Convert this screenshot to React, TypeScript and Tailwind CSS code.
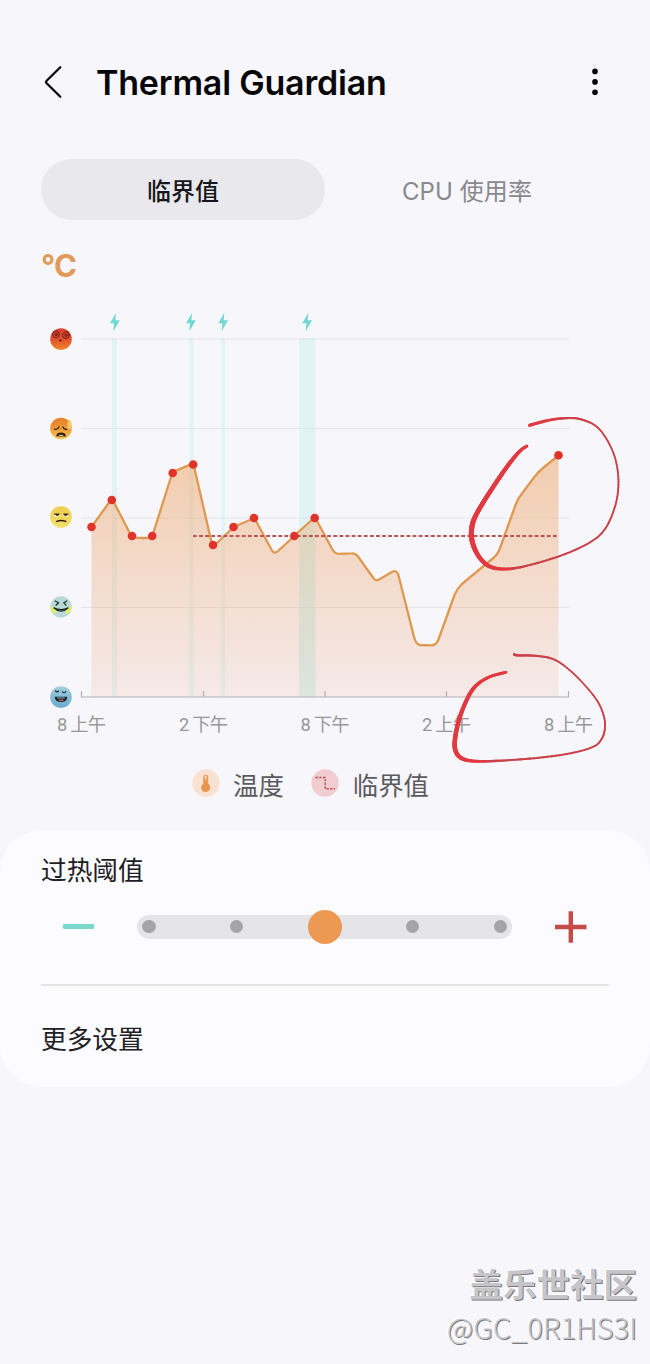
import React from "react";

type Pt = [number, number];
type InkPt = [number, number, number];

const GRID_Y = [339, 428.5, 518, 607.5];
const TICKS: { x: number; label: string }[] = [
  { x: 81.5, label: "8 上午" },
  { x: 203.5, label: "2 下午" },
  { x: 325, label: "8 下午" },
  { x: 446.5, label: "2 上午" },
  { x: 568.5, label: "8 上午" },
];
const CHARGES = [
  { x: 112, w: 5, icon: 115 },
  { x: 189.5, w: 4, icon: 191 },
  { x: 221.5, w: 3.5, icon: 223.3 },
  { x: 299, w: 16.5, icon: 307.3 },
];
const HOT: Pt[] = [
  [91.5, 527], [111.8, 500], [132, 536], [152.2, 536], [172.7, 473], [193.2, 464.5], [213, 545],
  [233.5, 527], [254, 518], [294.3, 536], [314.7, 518], [558.5, 455.3],
];
const CURVE =
  "M91.5 527L109.8 501.5Q111.8 498 113.8 502L130 533.5Q132 537 136 537.6Q142 538.3 148 537.8Q152 537.5 153.3 533L171 477Q172.4 472.5 176 470.6L188 465.6Q193.2 463 194.6 469L211 540Q213 547.5 218 542L229 531.5Q233.5 527 238 525L250 520Q254 518 256.5 522L272 550.5Q274 554.5 278 551L290 540Q294.3 536 299 531.5L310 521.5Q314.7 517 317.5 522L332.5 549.5Q334.5 553.7 339 553.8L352 553.4Q355.5 553.2 358 556.5L373 577.5Q375.5 582 380 579L391 572.5Q396 569 398.3 574.5L414 637Q416 644.5 420 645L431 645.3Q436 645.5 438.3 640L454.5 595Q457 588.5 462 584L477 571.5L494 557.5Q497.5 554.5 499.5 549.5L515.5 505Q518 498 522 493.5L534 477.5Q538 472 543 468L558.5 455.3";

const RING_TOP: InkPt[] = [
  [527, 446, 2.8], [520, 451, 3.4], [508.3, 465, 4.2], [490, 491.7, 4.6], [476, 515, 4.8],
  [471.7, 528.3, 5], [472.3, 541.7, 5], [478.3, 555.7, 4.6], [488.3, 565.7, 4], [501.7, 569, 3.2],
  [520, 567.3, 2.4], [550, 559.3, 2], [573.3, 550.7, 1.9], [591.7, 541.3, 1.8], [603.3, 531.3, 1.8],
  [611.7, 516, 1.8], [617.3, 496.7, 1.8], [618.3, 476.7, 1.8], [614.7, 456.7, 1.7],
  [606.7, 439.3, 1.7], [596.7, 426.7, 1.7], [583.3, 420, 2], [570, 418, 2.2], [550, 420, 2.7],
  [529.5, 425.3, 3.2],
];
const RING_BOTTOM: InkPt[] = [
  [506, 672.3, 2.8], [490, 676.7, 3], [476.7, 685, 3.5], [468.3, 696.7, 4], [460, 716.7, 4.3],
  [455.3, 736.7, 4.5], [455.3, 750, 4.5], [461.7, 758.3, 4], [476.7, 761.3, 3], [506.7, 760.3, 2.2],
  [543.3, 757.3, 2], [573.3, 752.7, 1.9], [593.3, 746.7, 1.8], [601, 740, 1.8], [604.7, 730, 1.8],
  [604, 716.7, 1.8], [596.7, 700, 1.7], [580, 680, 1.7], [563.3, 665, 1.7], [550, 658, 1.9],
  [533.3, 655.7, 2.2], [517, 655.3, 2.4], [514, 654, 2],
];

/** Pen stroke whose width varies along a Catmull-Rom spline. */
function Ink({ pts }: { pts: InkPt[] }) {
  const out: InkPt[] = [];
  const at = (i: number) => pts[Math.max(0, Math.min(pts.length - 1, i))];
  for (let i = 0; i < pts.length - 1; i++) {
    for (let s = 0; s < 8; s++) {
      const t = s / 8;
      const v = [0, 1, 2].map((k) => {
        const [a, b, c, d] = [at(i - 1)[k], at(i)[k], at(i + 1)[k], at(i + 2)[k]];
        return 0.5 * (2 * b + (c - a) * t + (2 * a - 5 * b + 4 * c - d) * t * t + (3 * b - a - 3 * c + d) * t * t * t);
      });
      out.push([v[0], v[1], v[2]]);
    }
  }
  out.push(pts[pts.length - 1]);
  return (
    <g strokeLinecap="round">
      {out.slice(1).map((p, i) => (
        <line key={i} x1={out[i][0]} y1={out[i][1]} x2={p[0]} y2={p[1]} strokeWidth={p[2]} stroke={p[2] > 2.6 ? "#e03a40" : "#cb4148"} />
      ))}
    </g>
  );
}

function Faces() {
  return (
    <g fill="none" strokeLinecap="round" stroke="#3a1c0c" strokeWidth="1.2">
      <g transform="translate(61 339)">
        <circle r="10.8" fill="url(#f1)" stroke="none" />
        <g stroke="#6d1a18" strokeWidth="1">
          <circle cx="-5" cy="-4.6" r="3.4" />
          <circle cx="-5" cy="-4.6" r="1.3" />
          <circle cx="5" cy="-3.8" r="3.4" />
          <circle cx="5" cy="-3.8" r="1.3" />
        </g>
        <circle cx="-.6" cy="1.4" r="1.1" fill="#4a0f0f" stroke="none" />
      </g>
      <g transform="translate(61 428.5)">
        <circle r="10.8" fill="url(#f2)" stroke="none" />
        <path d="M-6.5 .6Q-3.5 1.6-2-1.6M2-1.6Q3 1.6 6 .8" />
        <path d="M-4 7.4Q-4 4.6 0 4.6T4.2 7.4Z" fill="#4a2b10" />
        <path d="M-2 7.2Q0 6.2 2 7.2" stroke="#f5e6bb" strokeWidth=".9" />
        <path d="M6.8-7.8Q8.5-10 10-7L10.8-1Q10.4 1.2 8 .8Q6 .4 6.2-2Z" fill="#f5c75e" stroke="none" />
      </g>
      <g transform="translate(61 517)">
        <circle r="10.8" fill="url(#f3)" stroke="none" />
        <ellipse cx="-4.2" cy="-2" rx="3" ry="1.6" fill="#fffbe5" stroke="none" />
        <ellipse cx="4.8" cy="-2" rx="3" ry="1.6" fill="#fffbe5" stroke="none" />
        <path d="M-6.4-2.8H-2M2.8-2.8H7" />
        <path d="M-4.4-2.2H-3M4-2.2H5.4" strokeWidth="1.8" />
        <path d="M-4.3 4.4Q0 2.5 4.8 4.4" strokeWidth="1.5" />
      </g>
      <g transform="translate(61 607)">
        <circle r="10.7" fill="#b9d9d8" stroke="none" />
        <path d="M-10.7-.5Q-10.4 4.6-6 7Q-3.6 3.6-5.6 1.4Q-7.6-1-10.7-.5ZM10.7-.5Q10.4 4.6 6 7Q3.6 3.6 5.6 1.4Q7.6-1 10.7-.5Z" fill="#e5ed62" stroke="none" />
        <path d="M-5.8-6L-2.4-4.2L-5-1.8M5.8-6L2.8-4.2L5-1.8" stroke="#1d2a20" />
        <path d="M-7.4.8Q0 7.4 7.4.8Q0 4.6-7.4.8Z" fill="#e9f3ef" stroke="#1d2a20" />
      </g>
      <g transform="translate(61 697)" stroke="#15242e">
        <circle r="10.8" fill="url(#f5)" stroke="none" />
        <path d="M-5.6-6Q-4-4.4-2.4-6M1.4-5.2Q3.2-3.2 4.8-5.4" strokeWidth="1.1" />
        <path d="M-5.6.4H5.6Q5 4.4 0 4.4T-5.6.4Z" fill="#15242e" />
        <path d="M-3.4 1H3.4" stroke="#b9d3de" strokeWidth=".8" />
        <path d="M-1.6 3.4H1.8" stroke="#d86a5f" strokeWidth="1.4" />
      </g>
    </g>
  );
}

function Chart() {
  return (
    <svg className="block h-[470px] w-[650px] shrink-0" viewBox="0 295 650 470">
      <defs>
        <linearGradient id="area" x1="0" y1="455" x2="0" y2="697" gradientUnits="userSpaceOnUse">
          <stop offset="0" stopColor="#eda566" stopOpacity=".53" />
          <stop offset=".5" stopColor="#eeab78" stopOpacity=".36" />
          <stop offset="1" stopColor="#edaa85" stopOpacity=".17" />
        </linearGradient>
        <linearGradient id="f1" x1="0" y1="0" x2="0" y2="1">
          <stop offset="0" stopColor="#d83f31" /><stop offset=".5" stopColor="#e2512b" /><stop offset="1" stopColor="#f0832b" />
        </linearGradient>
        <linearGradient id="f2" x1="0" y1="0" x2="0" y2="1">
          <stop offset="0" stopColor="#e67f2c" /><stop offset=".5" stopColor="#eb9835" /><stop offset="1" stopColor="#f3ce57" />
        </linearGradient>
        <linearGradient id="f3" x1="0" y1="0" x2="0" y2="1">
          <stop offset="0" stopColor="#efcc4b" /><stop offset="1" stopColor="#f0e16b" />
        </linearGradient>
        <linearGradient id="f5" x1="0" y1="0" x2="0" y2="1">
          <stop offset="0" stopColor="#a3cfda" /><stop offset="1" stopColor="#69aacd" />
        </linearGradient>
      </defs>
      {GRID_Y.map((y) => (
        <line key={y} x1="81" x2="569" y1={y} y2={y} stroke="#e4e4e9" strokeWidth="1.2" />
      ))}
      {CHARGES.map((c) => (
        <g key={c.x}>
          <rect x={c.x} y="338" width={c.w} height="359" fill="#bdeeee" fillOpacity=".36" />
          <path d={`M${c.icon + 1} 312.8l-6 10.4h4l-.6 8l6.4-11h-4.4z`} fill="#72d8d0" />
        </g>
      ))}
      <path d={`${CURVE}V697H91.5Z`} fill="url(#area)" />
      <rect x="299" y="534" width="16.5" height="163" fill="#9fdcc9" fillOpacity=".12" />
      <path d="M81.5 691V697H568.5V691M203.5 691V697M325 691V697M446.5 691V697" fill="none" stroke="#b1b1b3" strokeWidth="1.2" />
      <path d={CURVE} fill="none" stroke="#df9850" strokeWidth="2.3" strokeLinejoin="round" />
      <path d="M193 536H559" stroke="#b8544e" strokeWidth="1.8" strokeDasharray="3.8 2.3" />
      {HOT.map(([x, y]) => (
        <circle key={x} cx={x} cy={y} r="4.3" fill="#e0332a" />
      ))}
      <Faces />
      <g fill="#97979a" fontSize="18.3" textAnchor="middle" className="font-['Roboto','Noto_Sans_CJK_SC',sans-serif] font-normal">
        {TICKS.map((t) => (
          <text key={t.x} x={t.x} y="731" textLength="49">{t.label}</text>
        ))}
      </g>
      <Ink pts={RING_TOP} />
      <Ink pts={RING_BOTTOM} />
    </svg>
  );
}

function Legend() {
  return (
    <div className="flex h-[65px] items-start pl-[192px] text-[25.4px] leading-[38px] text-[#5b5b5e]">
      <svg className="mt-1 size-7" viewBox="0 0 28 28">
        <circle cx="14" cy="14" r="13.7" fill="#f8e2d2" />
        <path d="M11.2 8.2a2.5 2.5 0 0 1 5 0v6.6a4.5 4.5 0 1 1-5 0z" fill="#e99750" />
        <path d="M13.7 7.6v2" stroke="#f8e2d2" strokeWidth="1.8" strokeLinecap="round" />
      </svg>
      <span className="ml-[13px] mt-0.5">温度</span>
      <svg className="ml-[27px] mt-1 size-7" viewBox="0 0 28 28">
        <circle cx="14" cy="14" r="13.7" fill="#f1cdd1" />
        <path d="M4.5 8.5H14.2V19.8H24" fill="none" stroke="#c04d50" strokeWidth="1.4" strokeDasharray="2.4 1.3" />
      </svg>
      <span className="ml-[14px] mt-0.5">临界值</span>
    </div>
  );
}

function Slider() {
  return (
    <div className="mt-[19px] flex h-[35px] items-center pl-[63px]">
      <span className="h-[4.5px] w-[31px] rounded-[1px] bg-[#7bd8ce]" />
      <div className="ml-[43px] flex h-6 w-[375px] items-center justify-between rounded-full bg-[#e5e4e8] px-[5px]">
        <i className="size-[13.5px] rounded-full bg-[#a5a4a8]" />
        <i className="-mr-[10px] size-[13.5px] rounded-full bg-[#a5a4a8]" />
        <i className="size-[34px] shrink-0 rounded-full bg-[#eb9953]" />
        <i className="-ml-[10px] size-[13.5px] rounded-full bg-[#a5a4a8]" />
        <i className="size-[13.5px] rounded-full bg-[#a5a4a8]" />
      </div>
      <svg className="ml-[43px] size-8" viewBox="0 0 32 32">
        <path d="M0 16H31.5M15.8 .3V31.7" stroke="#c34c49" strokeWidth="4.4" />
      </svg>
    </div>
  );
}

export default function App() {
  return (
    <div className="flex h-[1364px] w-[650px] flex-col overflow-hidden bg-[#f7f6fb] font-['Inter','Noto_Sans_CJK_SC',sans-serif]">
      <header className="flex h-[159px] shrink-0 items-start pl-[43px] pt-[60px]">
        <svg className="mt-1 h-9 w-6" viewBox="0 0 24 36">
          <path d="M17.3 3.3L3.4 17Q2.4 18 3.4 19L17.3 32.7" fill="none" stroke="#0b0b0c" strokeWidth="2.3" strokeLinecap="round" />
        </svg>
        <h1 className="ml-[29px] w-[478px] whitespace-nowrap font-['Inter'] text-[34px] font-semibold leading-[46px] tracking-[-0.2px] text-[#060607]">
          Thermal Guardian
        </h1>
        <svg className="mt-1.5 h-8 w-10" viewBox="0 0 40 32">
          <circle cx="21" cy="5.4" r="2.8" />
          <circle cx="21" cy="15.9" r="2.8" />
          <circle cx="21" cy="26.2" r="2.8" />
        </svg>
      </header>
      <nav className="ml-[41px] flex h-[61px] w-[568px] shrink-0 text-[24px] leading-[61px]">
        <div className="w-[284px] rounded-full bg-[#e9e9ed] pt-0.5 text-center font-medium text-[#17171a]">临界值</div>
        <div className="w-[284px] pt-0.5 text-center tracking-[0.1px] text-[#89898d]">CPU 使用率</div>
      </nav>
      <div className="h-[75px] shrink-0 pl-[41px] pt-[26px] font-['Inter'] text-[31px] font-bold leading-10 tracking-[-0.8px] text-[#e09a5c]">°C</div>
      <Chart />
      <Legend />
      <section className="h-[257px] shrink-0 rounded-[42px] bg-[#fcfbff] text-[25.7px] leading-[38px] text-[#202022]">
        <h2 className="pl-[41px] pt-[22px]">过热阈值</h2>
        <Slider />
        <div className="mx-[41px] mt-[40px] h-[1.5px] bg-[#e5e4e4]" />
        <p className="pl-[41px] pt-[35px]">更多设置</p>
      </section>
      <footer className="mt-auto flex flex-col items-end pb-[17px] pr-[13px] font-['Noto_Sans_CJK_SC',sans-serif] text-[#c6c5c9] [text-shadow:1px_1px_0_#78787b,-1px_-1px_1px_#ffffff]">
        <div className="text-[33.5px] font-bold leading-[45px]">盖乐世社区</div>
        <div className="text-[29px] font-light leading-[42px] tracking-[0.05px]">@GC_0R1HS3I</div>
      </footer>
    </div>
  );
}
